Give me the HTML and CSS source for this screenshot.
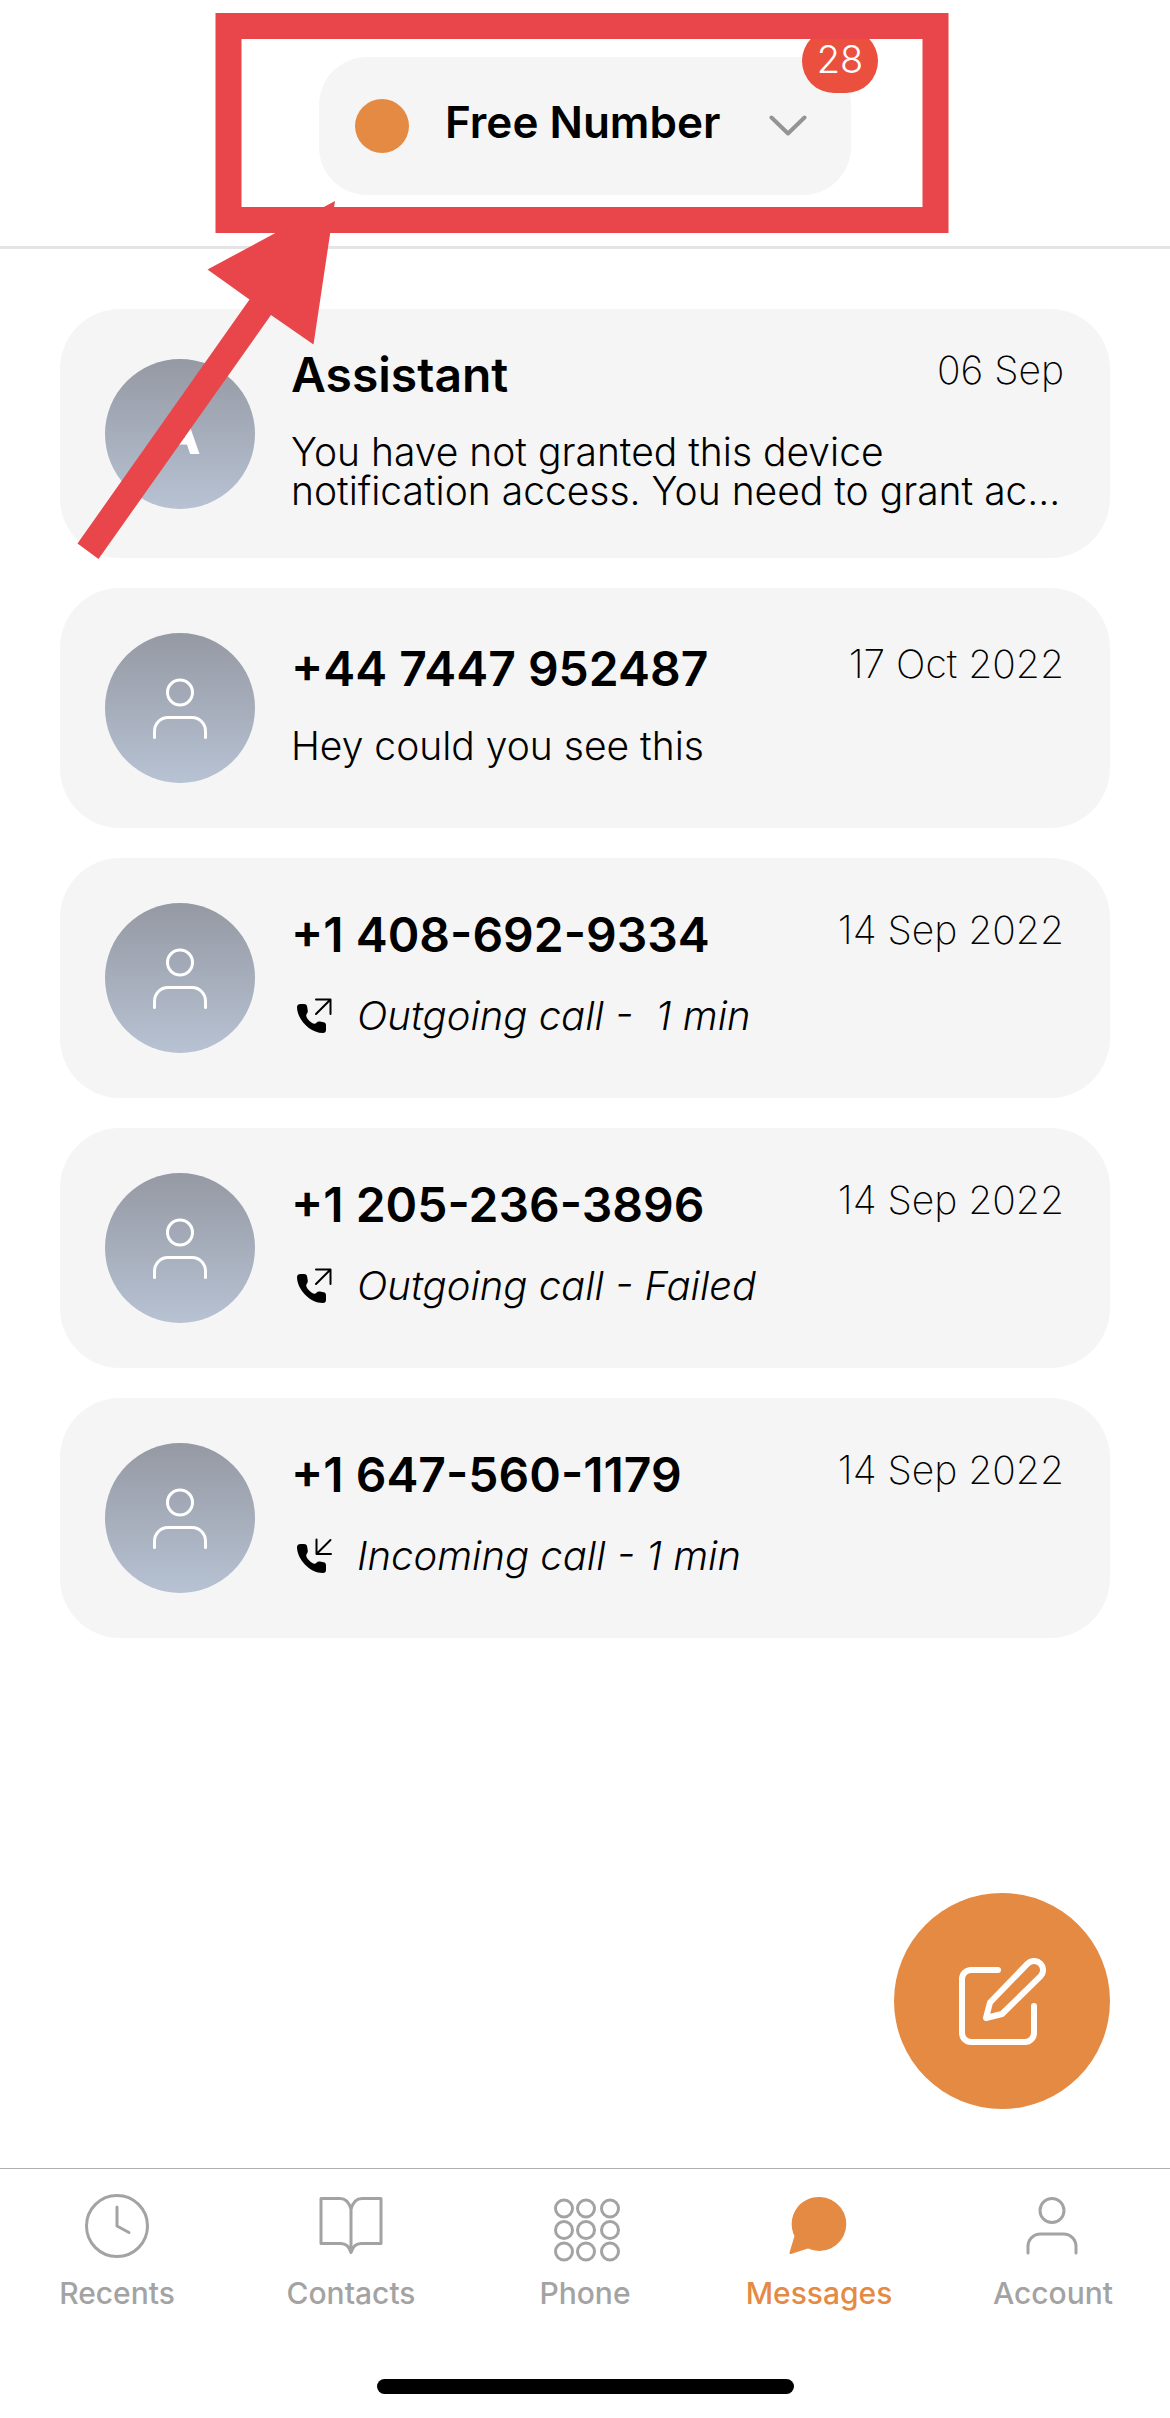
FILE: index.html
```html
<!DOCTYPE html>
<html lang="en">
<head>
    <meta charset="UTF-8">
    <title>Messages</title>
    <link rel="stylesheet" href="styles.css">
</head>
<body>
    <!-- Shared icons -->
    <svg class="icon-defs" width="0" height="0" aria-hidden="true">
        <symbol id="icon-person" viewBox="0 0 54 61">
            <circle cx="27" cy="14.5" r="12.5"/>
            <path d="M1.5 59.5v-6c0-8 6-14 13.5-14h24c7.500 0 13.500 6 13.500 14v6"/>
        </symbol>
        <symbol id="icon-handset" viewBox="0 0 36 36">
            <path class="handset" d="M1 9C1 7 2.500 6 4.500 6H8c2 0 3 1 3.200 3 .2 1.800.6 3 .6 4.200 0 1.800-1.600 2.800-1.600 4.300 0 2.600 5.300 8.300 8.300 8.300 1.500 0 2.300-2.300 4.500-2.300 1.200 0 3 .5 4.500.7 1.700.3 2.500 1.300 2.500 3V32c0 2-1.200 3-3 3C13.500 35 1 21 1 9z"/>
        </symbol>
    </svg>

    <header class="header">
        <button class="number-btn">
            <span class="dot"></span>
            <span class="number-name">Free Number</span>
            <svg class="chevron" viewBox="0 0 38 22"><path d="M2.500 2.500 19 18.500 35.500 2.500"/></svg>
            <span class="badge">28</span>
        </button>
    </header>

    <main class="messages">
        <a href="#" class="card">
            <span class="avatar">A</span>
            <div class="card-body">
                <div class="card-top">
                    <h2>Assistant</h2>
                    <time>06 Sep</time>
                </div>
                <p class="preview">You have not granted this device<br>notification access. You need to grant ac...</p>
            </div>
        </a>
        <a href="#" class="card">
            <span class="avatar"><svg class="person"><use href="#icon-person"/></svg></span>
            <div class="card-body">
                <div class="card-top">
                    <h2>+44 7447 952487</h2>
                    <time>17 Oct 2022</time>
                </div>
                <p class="preview">Hey could you see this</p>
            </div>
        </a>
        <a href="#" class="card">
            <span class="avatar"><svg class="person"><use href="#icon-person"/></svg></span>
            <div class="card-body">
                <div class="card-top">
                    <h2>+1 408-692-9334</h2>
                    <time>14 Sep 2022</time>
                </div>
                <p class="call">
                    <svg class="call-icon" viewBox="0 0 36 36"><use href="#icon-handset"/><path d="M20 1.500h14.500V16M34 2 20 16"/></svg>
                    Outgoing call -&nbsp; 1 min
                </p>
            </div>
        </a>
        <a href="#" class="card">
            <span class="avatar"><svg class="person"><use href="#icon-person"/></svg></span>
            <div class="card-body">
                <div class="card-top">
                    <h2>+1 205-236-3896</h2>
                    <time>14 Sep 2022</time>
                </div>
                <p class="call">
                    <svg class="call-icon" viewBox="0 0 36 36"><use href="#icon-handset"/><path d="M20 1.500h14.500V16M34 2 20 16"/></svg>
                    Outgoing call - Failed
                </p>
            </div>
        </a>
        <a href="#" class="card">
            <span class="avatar"><svg class="person"><use href="#icon-person"/></svg></span>
            <div class="card-body">
                <div class="card-top">
                    <h2>+1 647-560-1179</h2>
                    <time>14 Sep 2022</time>
                </div>
                <p class="call">
                    <svg class="call-icon" viewBox="0 0 36 36"><use href="#icon-handset"/><path d="M20.500 1.500v14.500H35M34.500 2 21 15.500"/></svg>
                    Incoming call - 1 min
                </p>
            </div>
        </a>

        <button class="compose-btn" aria-label="New message">
            <svg viewBox="0 0 87 87">
                <path d="M39 12H12a9 9 0 0 0-9 9v54a9 9 0 0 0 9 9h54a9 9 0 0 0 9-9V48"/>
                <path d="M31 44.500 68.600 5.600a9 9 0 0 1 12.800 12.800L43 56 27 60z"/>
            </svg>
        </button>
    </main>

    <nav class="tabs">
        <a href="#" class="tab">
            <svg viewBox="0 0 66 66"><circle cx="33" cy="33" r="30.500"/><path d="M33 14v19l12 6.500"/></svg>
            Recents
        </a>
        <a href="#" class="tab">
            <svg viewBox="0 0 66 66"><path d="M3 5.500h19c6 0 9.500 5 11 11 1.500-6 5-11 11-11h19v45H43c-5 0-8.500 4-10 9-1.500-5-5-9-10-9H3zM33 16v43"/></svg>
            Contacts
        </a>
        <a href="#" class="tab">
            <svg viewBox="0 0 66 66">
                <circle cx="12" cy="15.500" r="8.500"/><circle cx="34" cy="15.500" r="8.500"/><circle cx="58" cy="15.500" r="8.500"/>
                <circle cx="12" cy="37" r="8.500"/><circle cx="34" cy="37" r="8.500"/><circle cx="58" cy="37" r="8.500"/>
                <circle cx="12" cy="58.500" r="8.500"/><circle cx="34" cy="58.500" r="8.500"/><circle cx="58" cy="58.500" r="8.500"/>
            </svg>
            Phone
        </a>
        <a href="#" class="tab active">
            <svg viewBox="0 0 66 66"><path d="M34 4a27 27 0 1 1-12 51.500L5 61c-1 .3-1.800-.5-1.500-1.500L8.500 43A27 27 0 0 1 34 4z"/></svg>
            Messages
        </a>
        <a href="#" class="tab">
            <svg viewBox="0 0 66 66"><circle cx="32" cy="17.500" r="12"/><path d="M8 60v-6.500C8 46.500 13.500 41 20.500 41h23c7 0 12.500 5.500 12.500 12.500V60"/></svg>
            Account
        </a>
    </nav>
    <div class="home-bar"></div>

    <!-- Callout around the number picker -->
    <svg class="callout" viewBox="0 0 1170 600" aria-hidden="true">
        <rect x="228.500" y="26" width="707" height="194"/>
        <path d="M335 201 313.500 344.500 271 315 98.500 559 77.500 543.500 249.500 299.500 207.500 269.500z"/>
    </svg>
</body>
</html>
```
FILE: styles.css
```css
* { box-sizing: border-box; }
body {
    font-family: Inter, 'Liberation Sans', sans-serif;
    margin: 0;
    min-height: 100vh;
    display: flex;
    flex-direction: column;
    position: relative;
    background: #fff;
    color: #000;
}
h2, p { margin: 0; }
a { color: inherit; text-decoration: none; }
button {
    font-family: inherit;
    color: inherit;
    border: none;
    cursor: pointer;
}
svg { fill: none; stroke-linecap: round; stroke-linejoin: round; }
.icon-defs { position: absolute; }

.header {
    display: flex;
    justify-content: center;
    padding: 57px 0 51px;
    border-bottom: 3px solid #e4e4e4;
}
.number-btn {
    position: relative;
    display: flex;
    align-items: center;
    width: 532px;
    height: 138px;
    padding: 0 44px 0 36px;
    border-radius: 48px;
    background: #f5f5f5;
}
.dot {
    width: 54px;
    height: 54px;
    border-radius: 50%;
    background: #e58a43;
}
.number-name {
    margin: 0 auto 8px 36px;
    font-size: 44px;
    font-weight: 600;
}
.chevron {
    width: 38px;
    height: 22px;
    stroke: #949494;
    stroke-width: 4;
}
.badge {
    position: absolute;
    top: -28px;
    right: -27px;
    min-width: 76px;
    padding: 0 14px 4px;
    border-radius: 32px;
    background: #eb4f3d;
    color: #fff;
    font-size: 38px;
    font-weight: 300;
    line-height: 60px;
}

.messages {
    position: relative;
    flex: 1;
    display: flex;
    flex-direction: column;
    gap: 30px;
    padding: 60px;
}
.card {
    display: flex;
    align-items: center;
    gap: 36px;
    min-height: 240px;
    padding: 36px 46px 36px 45px;
    border-radius: 60px;
    background: #f5f5f5;
}
.avatar {
    flex: none;
    display: flex;
    align-items: center;
    justify-content: center;
    width: 150px;
    height: 150px;
    border-radius: 50%;
    background: linear-gradient(#9599a3, #b7c2d3);
    color: #fff;
    font-size: 56px;
    font-weight: 700;
}
.person {
    width: 54px;
    height: 61px;
    stroke: #fff;
    stroke-width: 3;
}
.card-body {
    flex: 1;
    padding-bottom: 12px;
}
.card-top {
    display: flex;
    justify-content: space-between;
    margin-bottom: 27px;
}
h2 {
    font-size: 48px;
    font-weight: 600;
    line-height: 60px;
}
time {
    font-size: 39px;
    font-weight: 200;
    line-height: 50px;
}
.preview {
    font-size: 39px;
    font-weight: 300;
    line-height: 39px;
    white-space: nowrap;
}
.call {
    display: flex;
    align-items: center;
    gap: 25px;
    padding-left: 5px;
    font-size: 40px;
    font-style: italic;
    font-weight: 300;
    line-height: 48px;
}
.call-icon {
    width: 36px;
    height: 36px;
    stroke: #000;
    stroke-width: 2;
}
.handset { fill: #000; stroke: none; }

.compose-btn {
    position: absolute;
    right: 60px;
    bottom: 59px;
    display: flex;
    align-items: center;
    justify-content: center;
    width: 216px;
    height: 216px;
    border-radius: 50%;
    background: #e58a43;
}
.compose-btn svg {
    width: 87px;
    height: 87px;
    stroke: #fff;
    stroke-width: 6;
}

.tabs {
    display: grid;
    grid-template-columns: repeat(5, 1fr);
    padding: 24px 0 68px;
    border-top: 1px solid #b0b0b0;
}
.tab {
    display: flex;
    flex-direction: column;
    align-items: center;
    gap: 16px;
    color: #a3a3a3;
    font-size: 30px;
    font-weight: 500;
    line-height: 36px;
}
.tab svg {
    width: 66px;
    height: 66px;
    overflow: visible;
    stroke: currentColor;
    stroke-width: 3;
}
.tab.active { color: #e58a43; }
.tab.active svg { fill: currentColor; stroke: none; }
.home-bar {
    align-self: center;
    width: 417px;
    height: 15px;
    margin-bottom: 24px;
    border-radius: 8px;
    background: #000;
}

.callout {
    position: absolute;
    top: 0;
    left: 0;
    width: 100%;
    pointer-events: none;
}
.callout rect {
    stroke: #e8464a;
    stroke-width: 26;
    stroke-linejoin: miter;
}
.callout path { fill: #e8464a; }
```
